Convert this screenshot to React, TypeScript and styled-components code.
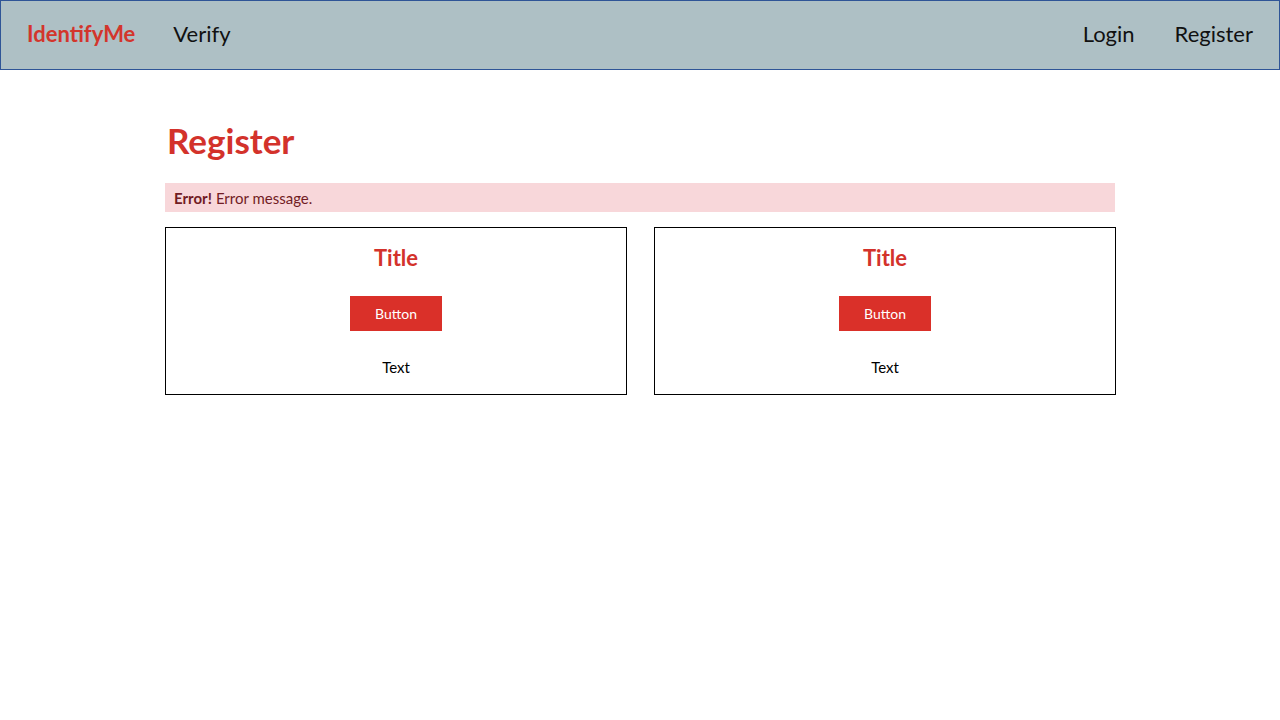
import styled, { createGlobalStyle } from 'styled-components';

const GlobalStyle = createGlobalStyle`
  html, body {
    margin: 0;
    padding: 0;
    background: #ffffff;
    font-family: Lato, "Open Sans", sans-serif;
  }
`;

const NavBar = styled.nav`
  height: 70px;
  box-sizing: border-box;
  display: flex;
  align-items: center;
  background: #aec0c5;
  border: 1px solid #2f5597;
  padding: 0 26px 3px 26px;
`;

const NavGroup = styled.div<{ $gap: number }>`
  display: flex;
  align-items: center;
  gap: ${(p) => p.$gap}px;
`;

const Spacer = styled.div`
  flex: 1;
`;

const Brand = styled.a`
  font-size: 22px;
  font-weight: 700;
  color: #d3352c;
  text-decoration: none;
`;

const NavLink = styled.a`
  font-size: 22px;
  color: #111;
  text-decoration: none;
`;

const Main = styled.main`
  width: 951px;
  margin: 0 auto;
  padding-top: 47px;
  padding-left: 1px;
`;

const Heading = styled.h1`
  margin: 0 0 20px 2px;
  font-size: 35px;
  font-weight: 700;
  color: #d3322b;
  line-height: 46px;
`;

const Alert = styled.div`
  width: 950px;
  height: 29px;
  box-sizing: border-box;
  display: flex;
  align-items: center;
  padding: 0 9px;
  background: #f8d7da;
  color: #721c24;
  font-size: 15px;

  strong {
    margin-right: 4px;
  }
`;

const CardRow = styled.div`
  display: grid;
  grid-template-columns: 462px 462px;
  gap: 27px;
  margin-top: 15px;
`;

const Card = styled.div`
  height: 168px;
  box-sizing: border-box;
  border: 1px solid #000;
  display: flex;
  flex-direction: column;
  align-items: center;
  padding-top: 15px;
`;

const CardTitle = styled.h2`
  margin: 0;
  font-size: 22px;
  font-weight: 700;
  color: #d3322b;
  line-height: 30px;
`;

const Button = styled.button`
  margin-top: 23px;
  width: 92px;
  height: 35px;
  border: none;
  background: #da3029;
  color: #fff;
  font-family: inherit;
  font-size: 14px;
`;

const CardText = styled.p`
  margin: 27px 0 0;
  font-size: 15px;
  color: #000;
`;

const cards = ['Title', 'Title'];

export default function App() {
  return (
    <>
      <GlobalStyle />
      <NavBar>
        <NavGroup $gap={38}>
          <Brand href="#">IdentifyMe</Brand>
          <NavLink href="#">Verify</NavLink>
        </NavGroup>
        <Spacer />
        <NavGroup $gap={40}>
          <NavLink href="#">Login</NavLink>
          <NavLink href="#">Register</NavLink>
        </NavGroup>
      </NavBar>
      <Main>
        <Heading>Register</Heading>
        <Alert>
          <strong>Error!</strong> Error message.
        </Alert>
        <CardRow>
          {cards.map((title, i) => (
            <Card key={i}>
              <CardTitle>{title}</CardTitle>
              <Button>Button</Button>
              <CardText>Text</CardText>
            </Card>
          ))}
        </CardRow>
      </Main>
    </>
  );
}
